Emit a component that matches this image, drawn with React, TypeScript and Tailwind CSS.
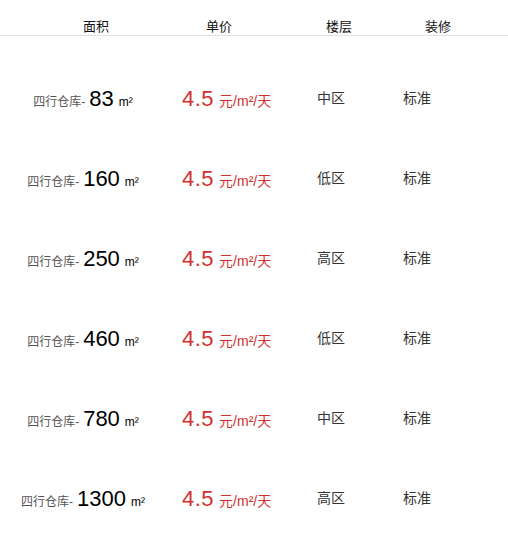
const rows = [
  { area: '83', floor: '中区' },
  { area: '160', floor: '低区' },
  { area: '250', floor: '高区' },
  { area: '460', floor: '低区' },
  { area: '780', floor: '中区' },
  { area: '1300', floor: '高区' },
]

const font = { fontFamily: '"Liberation Sans", "Noto Sans CJK SC", sans-serif' }

export default function App() {
  return (
    <div className="w-[508px] h-[551px] bg-white" style={font}>
      <div className="relative h-9 border-b border-[#e2e2e2] text-[13px] text-[#111]">
        <span className="absolute left-[83px] top-[20px] leading-none">面积</span>
        <span className="absolute left-[206px] top-[20px] leading-none">单价</span>
        <span className="absolute left-[326px] top-[20px] leading-none">楼层</span>
        <span className="absolute left-[425px] top-[20px] leading-none">装修</span>
      </div>
      <div className="pt-[22px]">
        {rows.map((r, i) => (
          <div key={i} className="flex items-center h-20">
            <div className="w-[166px] flex items-baseline justify-center whitespace-nowrap">
              <span className="text-[12px] text-[#555]">四行仓库-</span>
              <span className="text-[22px] text-black ml-[4px]">{r.area}</span>
              <span className="text-[12px] text-black ml-[5px]">m²</span>
            </div>
            <div className="ml-[16px] w-[135px] flex items-baseline whitespace-nowrap text-[#d32f2f]">
              <span className="text-[22px] tracking-[0.5px]">4.5</span>
              <span className="text-[14px] ml-[5px]">元/m²/天</span>
            </div>
            <div className="w-[86px] text-[14px] text-[#333]">{r.floor}</div>
            <div className="text-[14px] text-[#333]">标准</div>
          </div>
        ))}
      </div>
    </div>
  )
}
